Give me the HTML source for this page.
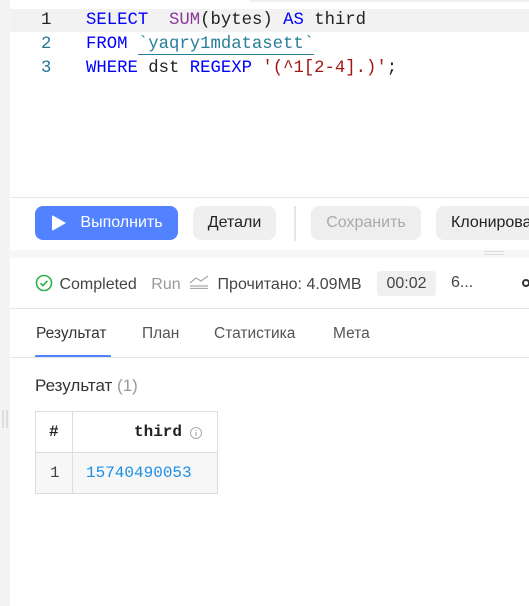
<!DOCTYPE html>
<html><head><meta charset="utf-8"><style>
*{margin:0;padding:0;box-sizing:border-box}
body{width:529px;height:606px;background:#fff;position:relative;overflow:hidden;font-family:"Liberation Sans",sans-serif;color:#222}
.left{position:absolute;left:0;top:0;width:10px;height:606px;background:#f4f4f4}
.mono{font-family:"Liberation Mono","DejaVu Sans Mono",monospace;font-size:17.3px}
.ln{position:absolute;left:41px;width:20px;color:#237893;text-align:left}
.code{position:absolute;left:86px;white-space:pre}
.kw{color:#0000ff}.fn{color:#8a3a9a}.str{color:#a31515}
.tb{position:absolute;height:34px;border-radius:8px;font-size:16px;line-height:34px;text-align:center}
.ab{position:absolute}
</style></head><body>
<div class="left"></div>
<div class="ab" style="left:250px;top:0;width:279px;height:2px;background:#f0f0f0"></div>
<div class="ab" style="left:10px;top:9px;width:519px;height:23px;background:#f2f2f2"></div>
<div class="mono">
<div class="ln" style="top:11px;color:#222">1</div>
<div class="ln" style="top:35px">2</div>
<div class="ln" style="top:59px">3</div>
<div class="code" style="top:11px"><span class="kw">SELECT</span>  <span class="fn">SUM</span>(bytes) <span class="kw">AS</span> third</div>
<div class="code" style="top:35px"><span class="kw">FROM</span> <span style="color:#267f99;border-bottom:1px solid #267f99">`yaqry1mdatasett`</span></div>
<div class="code" style="top:59px"><span class="kw">WHERE</span> dst <span class="kw">REGEXP</span> <span class="str">'(^1[2-4].)'</span>;</div>
</div>
<div class="ab" style="left:10px;top:197px;width:519px;height:1px;background:#e8e8e8"></div>
<div class="tb" style="left:35px;top:206px;width:143px;background:#5282ff;color:#fff"><span style="position:absolute;left:17px;top:9px;width:0;height:0;border-left:14px solid #fff;border-top:8px solid transparent;border-bottom:8px solid transparent;border-radius:2px"></span><span style="margin-left:30px">Выполнить</span></div>
<div class="tb" style="left:193px;top:206px;width:83px;background:#efefef">Детали</div>
<div class="ab" style="left:294px;top:206px;width:2px;height:35px;background:#e5e5e5"></div>
<div class="tb" style="left:311px;top:206px;width:110px;background:#eeeeee;color:#aaa">Сохранить</div>
<div class="tb" style="left:436px;top:206px;width:110px;background:#efefef;text-align:left;padding-left:15px;white-space:nowrap">Клонировать</div>
<div class="ab" style="left:10px;top:250px;width:519px;height:8px;background:#f7f7f7"></div>
<div class="ab" style="left:484px;top:251px;width:20px;height:1px;background:#ddd"></div>
<div class="ab" style="left:484px;top:254px;width:20px;height:1px;background:#ddd"></div>
<div class="ab" style="left:35px;top:274px;font-size:16px;white-space:nowrap">
<svg width="18" height="18" viewBox="0 0 18 18" style="vertical-align:-3px"><circle cx="9" cy="9" r="7.5" fill="none" stroke="#2db34a" stroke-width="1.6"/><path d="M5.5 9.2l2.4 2.4 4.5-4.8" fill="none" stroke="#2db34a" stroke-width="1.6"/></svg>
<span style="color:#444;margin-left:2px">Completed</span>
<span style="color:#999;margin-left:10px">Run</span>
<svg width="20" height="14" viewBox="0 0 20 14" style="vertical-align:0;margin-left:4px"><path d="M1 8l6-5 5 3 7-5M1 11h18M1 13.5h18" fill="none" stroke="#aaa" stroke-width="1.2"/></svg>
<span style="color:#444;margin-left:4px">Прочитано: 4.09MB</span>
</div>
<div class="ab" style="left:377px;top:271px;width:59px;height:25px;background:#f0f0f0;border-radius:3px;font-size:16px;line-height:25px;text-align:center;color:#444">00:02</div>
<div class="ab" style="left:451px;top:274px;font-size:16px;color:#444">6...</div>
<div class="ab" style="left:522px;top:279px;width:8px;height:8px;border:2px solid #333;border-radius:50%"></div>
<div class="ab" style="left:10px;top:308px;width:519px;height:1px;background:#e5e5e5"></div>
<div class="ab" style="left:36px;top:325px;font-size:15.5px;color:#333">Результат</div>
<div class="ab" style="left:142px;top:325px;font-size:15.5px;color:#555">План</div>
<div class="ab" style="left:214px;top:325px;font-size:15.5px;color:#555">Статистика</div>
<div class="ab" style="left:333px;top:325px;font-size:15.5px;color:#555">Мета</div>
<div class="ab" style="left:35px;top:355px;width:76px;height:3px;background:#5282ff;border-radius:1px"></div>
<div class="ab" style="left:10px;top:357px;width:519px;height:1px;background:#e5e5e5"></div>
<div class="ab" style="left:35px;top:376px;font-size:17px;color:#333">Результат <span style="color:#999">(1)</span></div>
<div class="ab" style="left:2px;top:410px;width:2px;height:18px;background:#ddd"></div>
<div class="ab" style="left:6px;top:410px;width:2px;height:18px;background:#ddd"></div>
<div class="ab" style="left:35px;top:411px;width:183px;height:83px;border:1px solid #ddd"></div>
<div class="ab" style="left:36px;top:452px;width:181px;height:1px;background:#ddd"></div>
<div class="ab" style="left:36px;top:453px;width:181px;height:40px;background:#f7f7f7"></div>
<div class="ab" style="left:72px;top:411px;width:1px;height:83px;background:#ddd"></div>
<div class="ab mono" style="left:49px;top:423px;font-size:16px;font-weight:bold">#</div>
<div class="ab mono" style="left:134px;top:423px;font-size:16px;font-weight:bold">third</div>
<svg class="ab" style="left:189px;top:426px" width="14" height="14" viewBox="0 0 14 14"><circle cx="7" cy="7" r="5.5" fill="none" stroke="#aaa" stroke-width="1"/><path d="M7 6v4M7 4v1" stroke="#aaa" stroke-width="1.2"/></svg>
<div class="ab mono" style="left:50px;top:464px;font-size:16px;color:#444">1</div>
<div class="ab mono" style="left:86px;top:464px;font-size:16px;color:#1a8fe6">15740490053</div>
</body></html>
